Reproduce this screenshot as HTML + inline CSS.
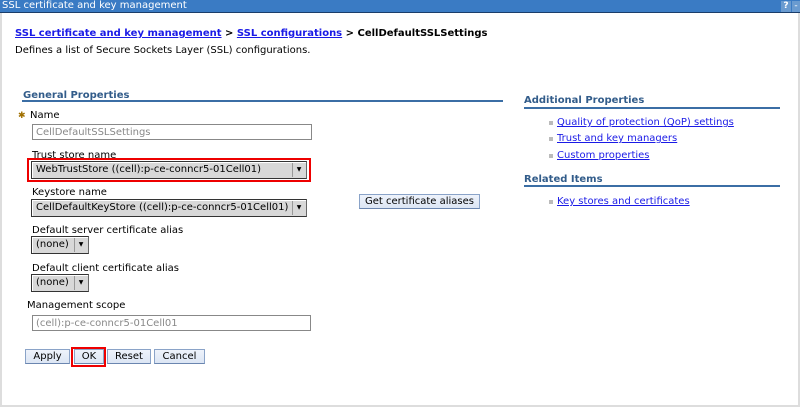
<!DOCTYPE html>
<html><head><meta charset="utf-8"><style>
*{margin:0;padding:0;box-sizing:border-box}
body{width:800px;height:407px;background:#fff;font-family:"DejaVu Sans","Liberation Sans",sans-serif;font-size:10px;color:#000;position:relative;overflow:hidden}
div,span{white-space:nowrap}
.a{position:absolute}
a{color:#1a1ae6;text-decoration:underline}
.h{color:#325c8a;font-weight:bold;font-size:10px}
.ln{position:absolute;height:2px;background:#3b6ea5}
.inp{position:absolute;border:1px solid #888;background:#fff;color:#888;padding:1px 3px;height:16px;line-height:13px}
.sel{position:absolute;background:#d8d8d8;border:1px solid #333;border-right-color:#666;height:18px;line-height:15px;padding-left:4px;box-shadow:inset 1px 1px 0 #fff;overflow:hidden}
.sel .ar{position:absolute;right:1px;top:1px;width:13px;height:14px;border-left:1px solid #999;font-size:6px;text-align:center;line-height:14px}
.btn{position:absolute;background:linear-gradient(#eef3fb,#dce6f4);border:1px solid #8aa3c8;border-bottom-color:#6b86b0;height:15px;line-height:13px;text-align:center}
.bul{position:absolute;width:4px;height:4px;background:#bbb}
</style></head><body>
<div class="a" style="left:0;top:0;width:800px;height:13px;background:#3a7bc4;border-bottom:1px solid #1a3d6a"></div>
<div class="a" style="left:2px;top:0px;color:#fff;font-size:10px">SSL certificate and key management</div>
<div class="a" style="left:781px;top:1px;width:10px;height:11px;background:#6a9bd0;color:#fff;font-size:9px;line-height:11px;text-align:center;font-weight:bold">?</div>
<div class="a" style="left:792px;top:1px;width:8px;height:11px;background:#6a9bd0;color:#fff;font-size:9px;line-height:11px;text-align:center">-</div>
<div class="a" style="left:0;top:13px;width:2px;height:394px;background:#ddd"></div>
<div class="a" style="left:798px;top:13px;width:2px;height:394px;background:#ddd"></div>
<div class="a" style="left:0;top:405px;width:800px;height:2px;background:#ddd"></div>

<div class="a" style="left:15px;top:28px;font-weight:bold"><a href="#">SSL certificate and key management</a> &gt; <a href="#">SSL configurations</a> &gt; CellDefaultSSLSettings</div>
<div class="a" style="left:15px;top:45px">Defines a list of Secure Sockets Layer (SSL) configurations.</div>

<div class="a h" style="left:23px;top:90px">General Properties</div>
<div class="ln" style="left:22px;top:100px;width:481px"></div>
<div class="a" style="left:18px;top:111px;color:#a07000;font-size:9px">✱</div>
<div class="a" style="left:30px;top:110px">Name</div>
<div class="inp" style="left:32px;top:124px;width:280px">CellDefaultSSLSettings</div>

<div class="a" style="left:32px;top:150px">Trust store name</div>
<div class="a" style="left:27px;top:158px;width:284px;height:24px;border:2px solid #e00"></div>
<div class="sel" style="left:31px;top:161px;width:276px">WebTrustStore ((cell):p-ce-conncr5-01Cell01)<span class="ar">▼</span></div>

<div class="a" style="left:32px;top:187px">Keystore name</div>
<div class="sel" style="left:31px;top:199px;width:276px">CellDefaultKeyStore ((cell):p-ce-conncr5-01Cell01)<span class="ar">▼</span></div>
<div class="btn" style="left:359px;top:194px;width:121px">Get certificate aliases</div>

<div class="a" style="left:32px;top:225px">Default server certificate alias</div>
<div class="sel" style="left:31px;top:236px;width:58px">(none)<span class="ar">▼</span></div>
<div class="a" style="left:32px;top:263px">Default client certificate alias</div>
<div class="sel" style="left:31px;top:274px;width:58px">(none)<span class="ar">▼</span></div>

<div class="a" style="left:27px;top:300px">Management scope</div>
<div class="inp" style="left:32px;top:315px;width:279px">(cell):p-ce-conncr5-01Cell01</div>

<div class="btn" style="left:25px;top:349px;width:45px">Apply</div>
<div class="a" style="left:71px;top:347px;width:35px;height:20px;border:2px solid #e00"></div>
<div class="btn" style="left:74px;top:349px;width:30px">OK</div>
<div class="btn" style="left:107px;top:349px;width:44px">Reset</div>
<div class="btn" style="left:154px;top:349px;width:51px">Cancel</div>

<div class="a h" style="left:524px;top:95px">Additional Properties</div>
<div class="ln" style="left:524px;top:107px;width:256px"></div>
<div class="bul" style="left:549px;top:121px"></div><div class="a" style="left:557px;top:117px"><a href="#">Quality of protection (QoP) settings</a></div>
<div class="bul" style="left:549px;top:137px"></div><div class="a" style="left:557px;top:133px"><a href="#">Trust and key managers</a></div>
<div class="bul" style="left:549px;top:154px"></div><div class="a" style="left:557px;top:150px"><a href="#">Custom properties</a></div>
<div class="a h" style="left:524px;top:174px">Related Items</div>
<div class="ln" style="left:524px;top:185px;width:256px"></div>
<div class="bul" style="left:549px;top:200px"></div><div class="a" style="left:557px;top:196px"><a href="#">Key stores and certificates</a></div>
</body></html>
